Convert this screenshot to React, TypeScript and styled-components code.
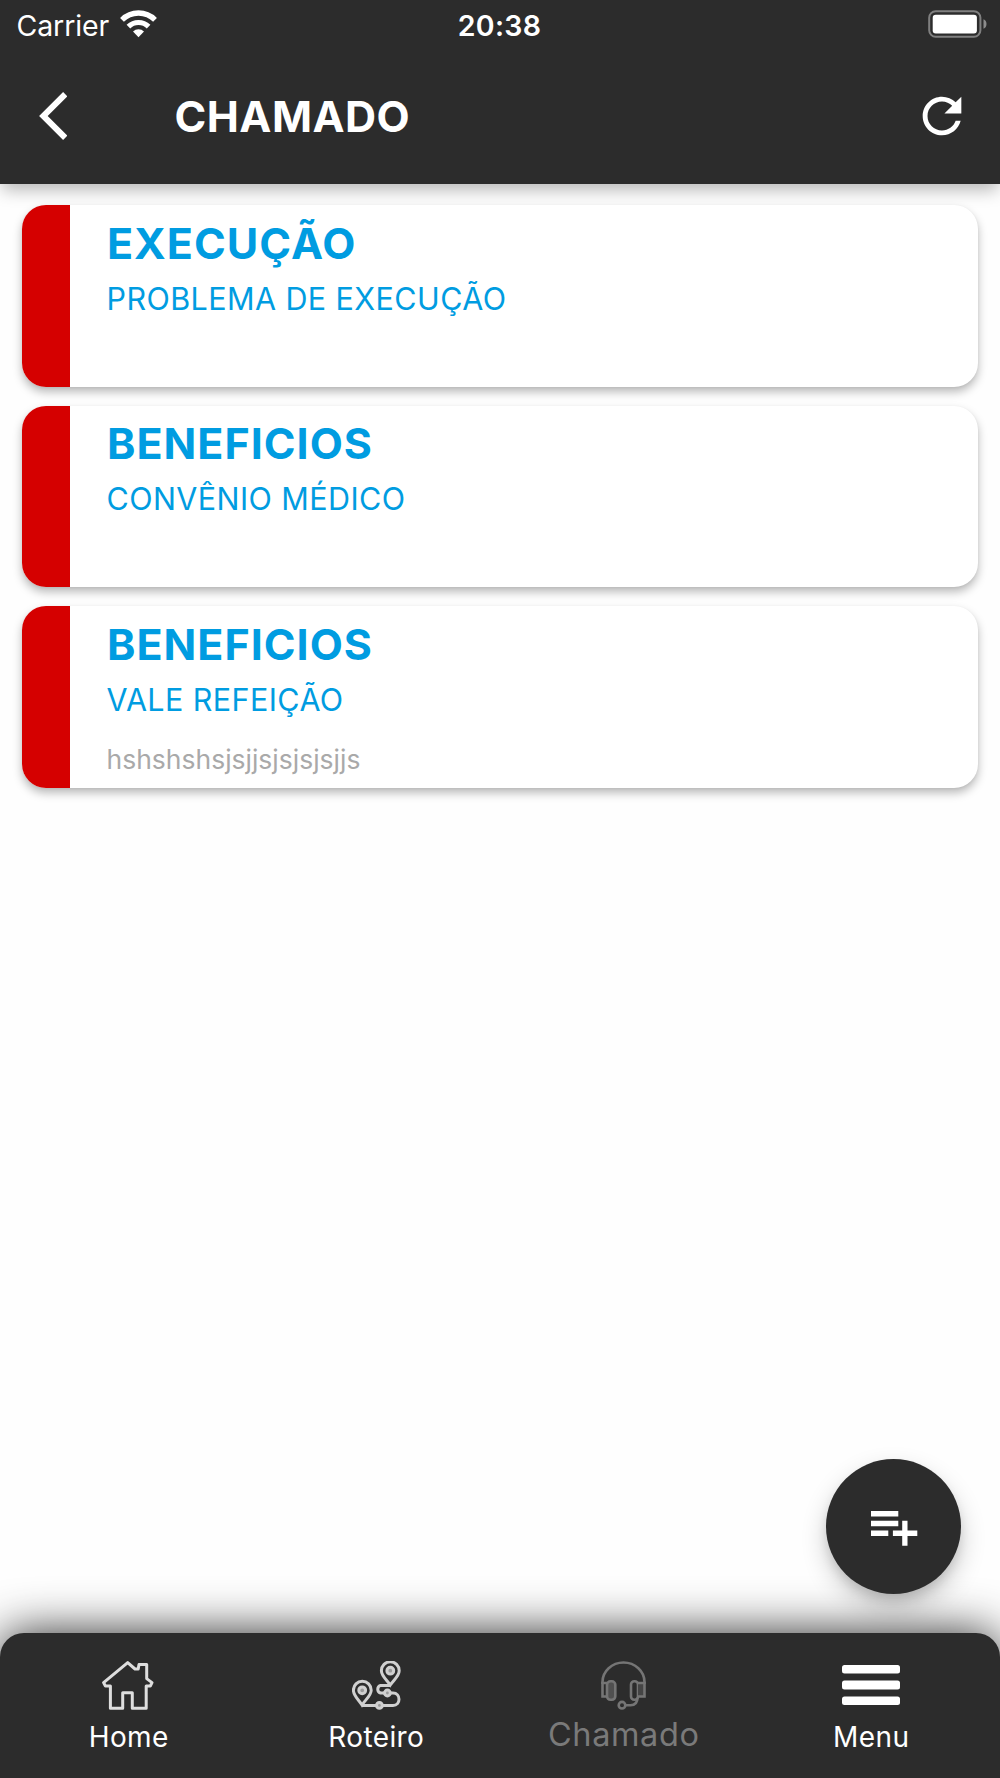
import React from "react";
import styled, { createGlobalStyle } from "styled-components";

const colors = {
  dark: "#2c2c2c",
  blue: "#009ce1",
  red: "#d50000",
  grey: "#a9a9a9",
};

const GlobalStyle = createGlobalStyle`
  * { box-sizing: border-box; }
  body {
    margin: 0;
    background: #fefefe;
    font-family: Inter, "Liberation Sans", sans-serif;
  }
  svg { display: block; flex: none; }
`;

const Screen = styled.div`
  position: relative;
  display: flex;
  flex-direction: column;
  width: 1000px;
  height: 1778px;
  overflow: hidden;
  background: #fefefe;
`;

const TopBar = styled.header`
  height: 183.5px;
  flex: none;
  background: ${colors.dark};
  color: #fff;
  box-shadow: 0 8px 16px -2px rgba(0, 0, 0, 0.28);
`;

const StatusBar = styled.div`
  display: grid;
  grid-template-columns: 1fr auto 1fr;
  align-items: center;
  height: 51px;
  padding: 0 13.5px 0 16.5px;
  font-size: 28.5px;
  line-height: 34px;
`;

const Carrier = styled.div`
  display: flex;
  align-items: center;
  gap: 10.5px;
  letter-spacing: -0.1px;

  svg {
    margin-top: -4px;
  }
`;

const Clock = styled.time`
  font-weight: 600;
  letter-spacing: 0.3px;
  padding-right: 4px;
`;

const StatusEnd = styled.div`
  display: flex;
  justify-content: flex-end;

  svg {
    margin-top: -3px;
  }
`;

const TitleBar = styled.div`
  display: flex;
  align-items: center;
  height: 130px;
  padding: 0 29.5px 0 38.5px;
`;

const IconButton = styled.button`
  display: flex;
  padding: 0;
  border: 0;
  background: none;
  color: inherit;
`;

const PageTitle = styled.h1`
  flex: 1;
  margin: 0 0 0 107.5px;
  font-size: 43px;
  line-height: 54px;
  font-weight: 700;
  letter-spacing: 0.45px;
`;

const List = styled.main`
  display: flex;
  flex: 1;
  flex-direction: column;
  gap: 19px;
  padding: 21.5px 22px 0;
`;

const Card = styled.article`
  display: flex;
  height: 181.5px;
  border-radius: 24px;
  overflow: hidden;
  background: #fff;
  box-shadow:
    0 5px 10px -0.5px rgba(0, 0, 0, 0.27),
    0 1px 3px 0 rgba(0, 0, 0, 0.05);
`;

const Stripe = styled.div`
  width: 48px;
  background: ${colors.red};
`;

const CardBody = styled.div`
  display: flex;
  flex-direction: column;
  padding: 10.5px 0 0 37px;
  white-space: nowrap;
`;

const CardTitle = styled.h2`
  margin: 0;
  color: ${colors.blue};
  font-size: 43px;
  line-height: 54px;
  font-weight: 700;
  letter-spacing: 1px;
`;

const CardSubtitle = styled.p`
  margin: 9px 0 0 -0.5px;
  color: ${colors.blue};
  font-size: 30.5px;
  line-height: 40px;
  letter-spacing: 0.42px;
`;

const CardNote = styled.p`
  margin: 21px 0 0 -0.5px;
  color: ${colors.grey};
  font-size: 26.5px;
  line-height: 36px;
`;

const AddButton = styled.button`
  position: absolute;
  right: 39px;
  bottom: 184px;
  display: flex;
  align-items: center;
  justify-content: center;
  width: 135px;
  height: 135px;
  padding: 4.5px 0 0 2px;
  border: 0;
  border-radius: 50%;
  background: ${colors.dark};
  box-shadow:
    0 7px 12px -2px rgba(0, 0, 0, 0.14),
    0 12px 26px 0 rgba(0, 0, 0, 0.2);
`;

const BottomNav = styled.nav`
  display: grid;
  grid-template-columns: repeat(4, 1fr);
  height: 145px;
  flex: none;
  padding: 0 5px;
  border-radius: 24px 24px 0 0;
  background: ${colors.dark};
  box-shadow: 0 0 48px rgba(0, 0, 0, 0.84);
`;

const NavItem = styled.a<{ $current?: boolean }>`
  display: flex;
  flex-direction: column;
  align-items: center;
  padding-top: 27px;
  color: ${(p) => (p.$current ? "#7a7a7a" : "#fff")};
`;

const NavIcon = styled.span`
  display: flex;
  align-items: center;
  height: 51px;
`;

const NavLabel = styled.span<{ $current?: boolean }>`
  margin-top: ${(p) => (p.$current ? 7 : 9)}px;
  font-size: ${(p) => (p.$current ? 32.5 : 28)}px;
  line-height: 34px;
  letter-spacing: ${(p) => (p.$current ? 0.6 : 0.4)}px;
`;

const WifiIcon = () => (
  <svg width="37" height="28" viewBox="0 0 37 28" fill="none" stroke="#fff">
    <path d="M2 9.8a23.4 23.4 0 0 1 33 0" strokeWidth="5.4" />
    <path d="M8.4 16.6a14.5 14.5 0 0 1 20.2 0" strokeWidth="5.2" />
    <path d="M13 21.6a7.8 7.8 0 0 1 11 0L18.5 27.3z" fill="#fff" stroke="none" />
  </svg>
);

const BatteryIcon = () => (
  <svg width="59" height="28" viewBox="0 0 59 28">
    <rect x="1.2" y="1.2" width="51.2" height="25.6" rx="6.5" fill="none" stroke="#808080" strokeWidth="2" />
    <rect x="4.7" y="4.8" width="44.2" height="18.6" rx="3" fill="#fff" />
    <path d="M55.5 9.2c2 .7 3 2.6 3 4.8s-1 4.1-3 4.8z" fill="#8c8c8c" />
  </svg>
);

const BackIcon = () => (
  <svg width="28.5" height="48" viewBox="0 2.1 11.67 19.8" fill="currentColor">
    <path d="M11.67 3.87L9.9 2.1 0 12l9.9 9.9 1.77-1.77L3.54 12z" />
  </svg>
);

const RefreshIcon = () => (
  <svg width="58" height="58" viewBox="0 0 24 24" fill="currentColor">
    <path d="M17.65 6.35C16.2 4.9 14.21 4 12 4c-4.42 0-7.99 3.58-7.99 8s3.57 8 7.99 8c3.73 0 6.84-2.55 7.73-6h-2.08c-.82 2.33-3.04 4-5.65 4-3.31 0-6-2.69-6-6s2.69-6 6-6c1.66 0 3.14.69 4.22 1.78L13 11h7V4l-2.35 2.35z" />
  </svg>
);

const PlaylistAddIcon = () => (
  <svg width="47" height="35" viewBox="0 0 47 35" fill="#fff">
    <path d="M0 0h27.3v5.4H0zM0 9.8h27.3v5.4H0zM0 19.5h17.3v5.4H0zM31.2 9.8h5.3v9.7h9.8v5.4h-9.8v9.8h-5.3v-9.8h-9.3v-5.4h9.3z" />
  </svg>
);

const HomeIcon = () => (
  <svg width="53" height="49" viewBox="0 0 53 49" fill="none" stroke="#dedede" strokeWidth="3" strokeLinejoin="round">
    <path d="M25.7 1.6L1.6 21.6 3.4 25H8.4V47.2H20.7V31.8H30.3V47.2H44.2V25H48.3L50 21.6 44.7 17.6V3.4H37L36.2 8H33z" />
  </svg>
);

const RouteIcon = () => (
  <svg width="49" height="49" viewBox="0 0 49 49" fill="none" stroke="#d0d0d0" strokeWidth="3">
    <path d="M38.3 24C35 19 29.4 15 29.4 9.7a8.9 8.9 0 0 1 17.8 0C47.2 15 41.6 19 38.3 24z" />
    <circle cx="38.3" cy="9.7" r="3.4" fill="#9a9a9a" />
    <path d="M10 44C6.6 38.6 1.4 34.5 1.4 29.2a8.9 8.9 0 0 1 17.8 0C19.2 34.5 13.4 38.6 10 44z" />
    <circle cx="10.2" cy="29.3" r="3.4" fill="#9a9a9a" />
    <path d="M38 24.4H28.5a4 4 0 0 0 0 7.6H41c8 0 8 12.4 0 12.4H10" />
    <circle cx="35.4" cy="32" r="2.9" fill="#999" />
    <circle cx="27.4" cy="44.4" r="2.9" fill="#999" />
  </svg>
);

const HeadsetIcon = () => (
  <svg width="45" height="49" viewBox="0 0 45 49" fill="none" stroke="#757575" strokeWidth="2.6">
    <path d="M1.5 23v-2a21 19.5 0 0 1 42 0v2" />
    <path d="M6 22H1.5V35.5H6" />
    <rect x="6" y="20.3" width="8.3" height="18.5" rx="3.5" fill="#505050" />
    <rect x="30" y="20.3" width="7" height="18.5" rx="3.3" />
    <path d="M37 22h6.5V35.5H37" fill="#454545" />
    <path d="M36.5 36.5c0 5-2.5 7.8-7 7.8H24.5" />
    <circle cx="21" cy="44.2" r="3.3" />
  </svg>
);

const MenuIcon = () => (
  <svg width="58" height="42" viewBox="0 0 58 42" fill="#fff">
    <rect width="58" height="8.6" rx="2.5" />
    <rect y="15.6" width="58" height="8.8" rx="2.5" />
    <rect y="31.4" width="58" height="8.6" rx="2.5" />
  </svg>
);

const tickets = [
  { title: "EXECUÇÃO", subtitle: "PROBLEMA DE EXECUÇÃO" },
  { title: "BENEFICIOS", subtitle: "CONVÊNIO MÉDICO" },
  { title: "BENEFICIOS", subtitle: "VALE REFEIÇÃO", note: "hshshshsjsjjsjsjsjsjjs" },
];

const tabs = [
  { label: "Home", icon: <HomeIcon /> },
  { label: "Roteiro", icon: <RouteIcon /> },
  { label: "Chamado", icon: <HeadsetIcon />, current: true },
  { label: "Menu", icon: <MenuIcon /> },
];

export default function App() {
  return (
    <>
      <GlobalStyle />
      <Screen>
        <TopBar>
          <StatusBar>
            <Carrier>
              Carrier
              <WifiIcon />
            </Carrier>
            <Clock>20:38</Clock>
            <StatusEnd>
              <BatteryIcon />
            </StatusEnd>
          </StatusBar>
          <TitleBar>
            <IconButton aria-label="Voltar">
              <BackIcon />
            </IconButton>
            <PageTitle>CHAMADO</PageTitle>
            <IconButton aria-label="Atualizar">
              <RefreshIcon />
            </IconButton>
          </TitleBar>
        </TopBar>
        <List>
          {tickets.map((t) => (
            <Card key={t.subtitle}>
              <Stripe />
              <CardBody>
                <CardTitle>{t.title}</CardTitle>
                <CardSubtitle>{t.subtitle}</CardSubtitle>
                {t.note && <CardNote>{t.note}</CardNote>}
              </CardBody>
            </Card>
          ))}
        </List>
        <BottomNav>
          {tabs.map((t) => (
            <NavItem key={t.label} $current={t.current}>
              <NavIcon>{t.icon}</NavIcon>
              <NavLabel $current={t.current}>{t.label}</NavLabel>
            </NavItem>
          ))}
        </BottomNav>
        <AddButton aria-label="Adicionar chamado">
          <PlaylistAddIcon />
        </AddButton>
      </Screen>
    </>
  );
}
